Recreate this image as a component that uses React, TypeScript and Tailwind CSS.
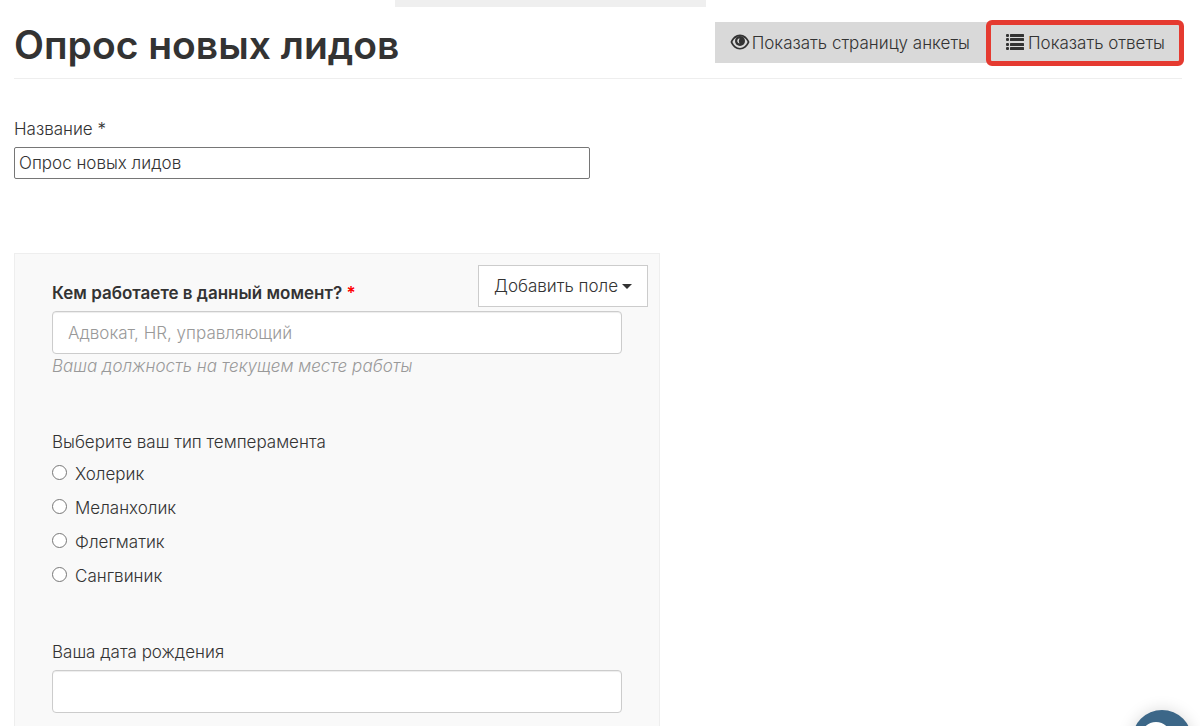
import { useState } from 'react';

const temperaments = ['Холерик', 'Меланхолик', 'Флегматик', 'Сангвиник'];

function EyeIcon() {
  return (
    <svg className="h-5 w-5 shrink-0" viewBox="0 0 20 20" aria-hidden="true">
      <path
        fill="currentColor"
        fillRule="evenodd"
        d="M10 1.500C5.800 1.500 2.200 4.600 .5 9c1.700 4.400 5.300 7.500 9.500 7.500s7.800-3.100 9.500-7.500c-1.700-4.400-5.300-7.500-9.500-7.500zM10 3.300a5 5 0 0 1 3.500 1.100c1.800.9 3.200 2.500 4.100 4.600-1.600 3.500-4.300 5.900-7.600 5.900s-6-2.400-7.600-5.900c.9-2.100 2.300-3.700 4.100-4.600A5 5 0 0 1 10 3.300z"
      />
      <circle cx="10" cy="8" r="5" fill="currentColor" />
      <path
        d="M9.400 5.200c-1.600.5-2.400 1.800-2.100 3.200.4 1.300 1.400 1.900 2.400 2-.8-1-.9-1.800-.8-2.700.1-.9.700-1.500.5-2.500z"
        className="fill-[#d9d9d9]"
      />
    </svg>
  );
}

function ListIcon() {
  return (
    <svg className="h-5 w-5 shrink-0" viewBox="0 0 20 20" fill="currentColor" aria-hidden="true">
      {[1, 5, 10, 14].map((y) => (
        <g key={y}>
          <rect x="0" y={y} width="3" height="3" rx="1" />
          <rect x="4" y={y} width="14" height="3" rx="0.500" />
        </g>
      ))}
    </svg>
  );
}

function TextField({
  id,
  value,
  placeholder,
  onChange,
}: {
  id: string;
  value: string;
  placeholder?: string;
  onChange: (value: string) => void;
}) {
  return (
    <input
      id={id}
      type="text"
      value={value}
      placeholder={placeholder}
      onChange={(e) => onChange(e.target.value)}
      className="block h-[43px] w-full rounded border border-[#ccc] bg-white px-[15px] font-light shadow-[inset_0_1px_1px_rgba(0,0,0,0.075)] placeholder:text-[#999]"
    />
  );
}

export default function App() {
  const [title, setTitle] = useState('Опрос новых лидов');
  const [job, setJob] = useState('');
  const [birthday, setBirthday] = useState('');
  const [temperament, setTemperament] = useState('');

  return (
    <div className="min-h-screen bg-white pr-[18px] pl-[14px] font-['Inter','Noto_Sans',sans-serif] text-[17px] leading-6 font-light text-[#333]">
      <div className="flex justify-center pr-24">
        <div className="h-[7px] w-[311px] bg-[#efefef]" />
      </div>

      <header className="flex items-start justify-between border-b border-[#eee] pb-[9px]">
        <h1 className="pt-[14px] text-[39px] leading-[48px] font-semibold">Опрос новых лидов</h1>
        <nav className="mt-[15px] flex">
          <a href="#form" className="flex h-[41px] items-center gap-0.5 bg-[#d9d9d9] pr-4 pl-[15px]">
            <EyeIcon />
            Показать страницу анкеты
          </a>
          <a
            href="#answers"
            className="relative flex h-[41px] items-center gap-0.5 bg-[#d9d9d9] pr-[17px] pl-5"
          >
            <ListIcon />
            Показать ответы
            <span className="absolute -top-0.5 -right-0.5 -bottom-[3px] left-0 rounded-md border-[5px] border-[#e53a30]" />
          </a>
        </nav>
      </header>

      <main>
        <div className="mt-[38px] max-w-[576px]">
          <label htmlFor="title" className="block">
            Название *
          </label>
          <input
            id="title"
            type="text"
            value={title}
            onChange={(e) => setTitle(e.target.value)}
            className="mt-1.5 block h-8 w-full rounded-xs border border-[#767676] bg-white px-1 font-light"
          />
        </div>

        <form className="relative mt-[74px] max-w-[646px] border border-[#eee] bg-[#f9f9f9] px-[37px] pt-[27px] pb-10">
          <button
            type="button"
            className="absolute top-[11px] right-[11px] flex h-[42px] items-center gap-1 border border-[#ccc] bg-white px-[15px]"
          >
            Добавить поле
            <span className="border-x-[5px] border-t-[5px] border-x-transparent border-t-[#333]" />
          </button>

          <div>
            <label htmlFor="job" className="mb-1.5 block font-semibold">
              Кем работаете в данный момент? <span className="text-[#f00]">*</span>
            </label>
            <TextField id="job" value={job} placeholder="Адвокат, HR, управляющий" onChange={setJob} />
            <p className="text-[#999] italic">Ваша должность на текущем месте работы</p>
          </div>

          <fieldset className="mt-[52px]">
            <legend>Выберите ваш тип темперамента</legend>
            <div className="mt-2 flex flex-col gap-2.5">
              {temperaments.map((item) => (
                <label key={item} className="flex items-start gap-2">
                  <input
                    type="radio"
                    name="temperament"
                    checked={temperament === item}
                    onChange={() => setTemperament(item)}
                    className="mt-[3px] size-[15px]"
                  />
                  {item}
                </label>
              ))}
            </div>
          </fieldset>

          <div className="mt-[52px]">
            <label htmlFor="birthday" className="mb-1.5 block">
              Ваша дата рождения
            </label>
            <TextField id="birthday" value={birthday} onChange={setBirthday} />
          </div>
        </form>
      </main>

      <button
        type="button"
        aria-label="Чат"
        className="fixed right-2 -bottom-11 size-15 rounded-full bg-[#3c6788] shadow-[0_0_16px_rgba(0,0,0,0.15)]"
      >
        <svg viewBox="0 0 60 60" className="size-15" fill="white" aria-hidden="true">
          <path d="M24 12c-8 0-14 5.500-14 13 0 4 2 7 4 9l-1 6 6-3c2 1 3 1 5 1 8 0 14-5.500 14-13s-6-13-14-13z" />
          <path d="M41 24c0 9-7 16-16 17 2 3 6 5 11 5 2 0 4 0 6-1l6 3-1-6c2-2 4-5 4-8 0-5-4-9-10-10z" />
        </svg>
      </button>
    </div>
  );
}
